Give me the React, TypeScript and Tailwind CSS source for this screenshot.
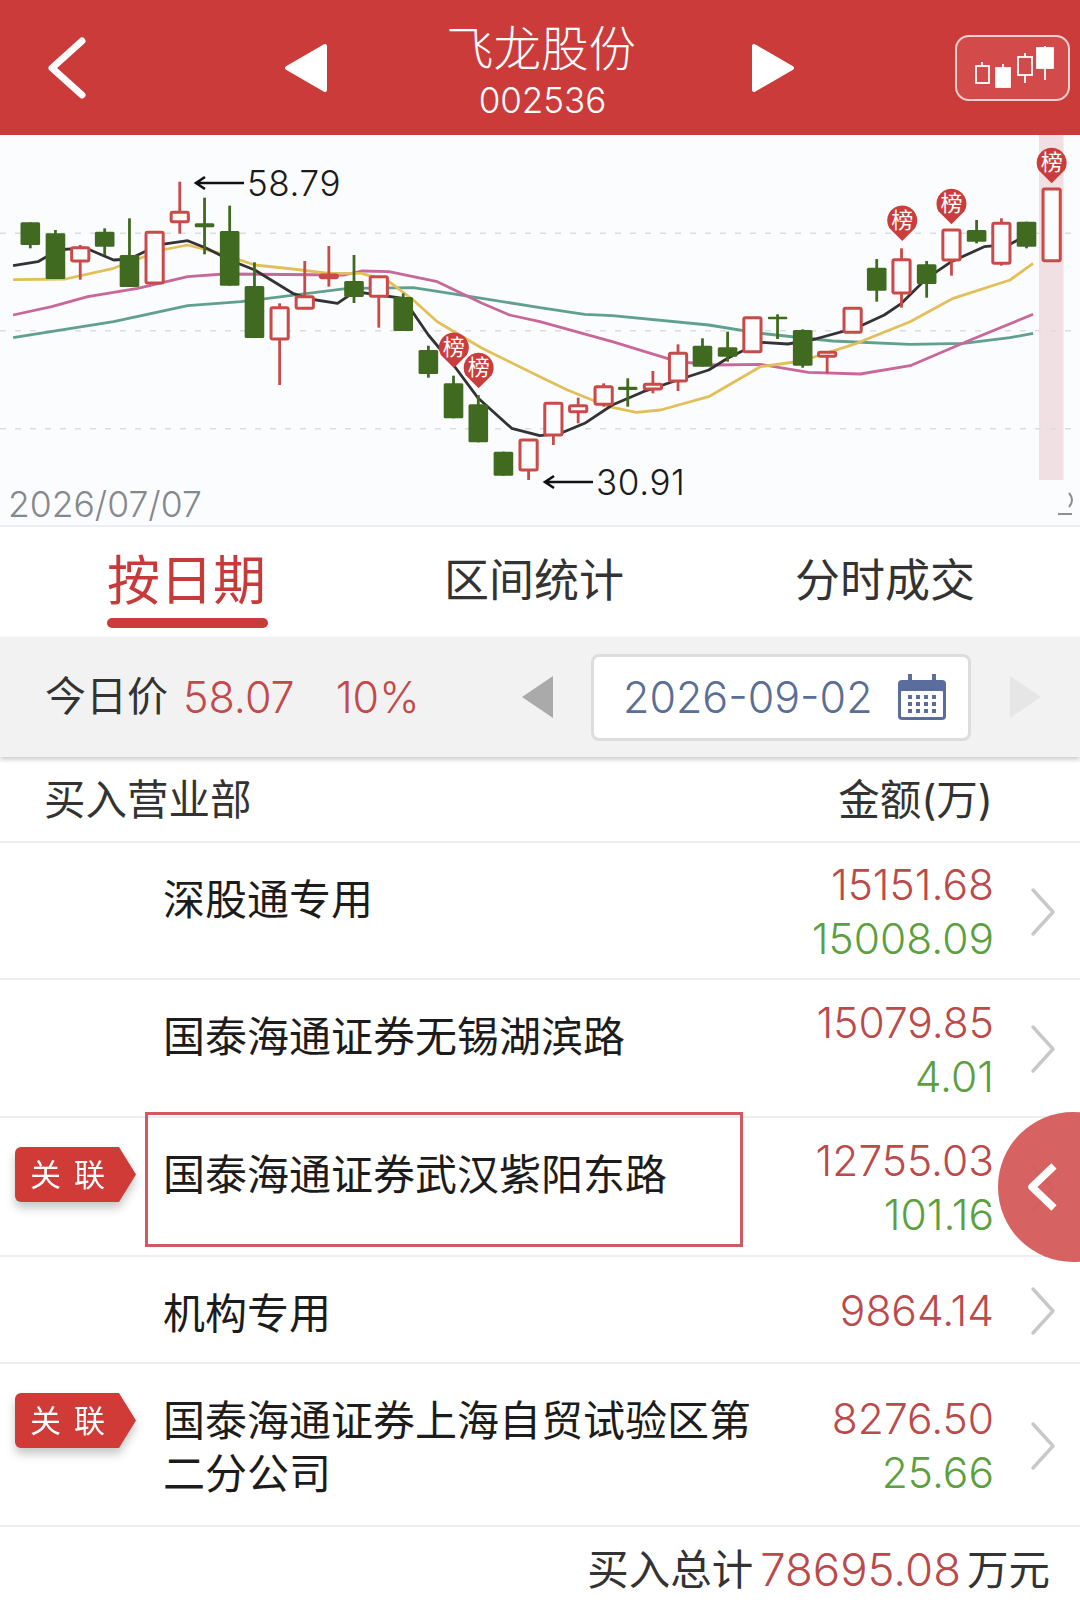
// chart numbers are read off the two zoomed crops: x / 2.904, y / 3
const sx = (x: number) => x / 2.904;
const sy = (y: number) => y / 3;
const OFFSET = 1568;

type Candle = [number, number, number, number, number, "r" | "g"];

const CANDLES: Candle[] = [
  [88, 262, 262, 330, 340, "g"],
  [161, 285, 295, 432, 432, "g"],
  [233, 330, 338, 378, 434, "r"],
  [304, 280, 290, 335, 360, "g"],
  [376, 250, 360, 456, 456, "g"],
  [449, 292, 292, 444, 444, "r"],
  [522, 140, 232, 260, 296, "r"],
  [594, 188, 265, 277, 358, "g"],
  [667, 212, 288, 452, 452, "g"],
  [739, 382, 453, 609, 609, "g"],
  [812, 505, 518, 612, 750, "r"],
  [885, 378, 485, 520, 520, "r"],
  [955, 333, 420, 428, 455, "r"],
  [1028, 360, 438, 486, 504, "g"],
  [1100, 425, 425, 484, 578, "r"],
  [1171, 475, 486, 588, 588, "g"],
  [1244, 632, 645, 717, 728, "g"],
  [1317, 722, 745, 850, 850, "g"],
  [1389, 780, 808, 922, 922, "g"],
  [1462, 950, 950, 1022, 1022, "g"],
  [1535, 915, 915, 1005, 1035, "r"],
  [OFFSET + 39, 805, 805, 900, 930, "r"],
  [OFFSET + 111, 788, 812, 830, 865, "r"],
  [OFFSET + 185, 745, 755, 808, 815, "r"],
  [OFFSET + 255, 730, 755, 765, 815, "g"],
  [OFFSET + 328, 708, 748, 762, 775, "r"],
  [OFFSET + 401, 628, 655, 738, 768, "r"],
  [OFFSET + 472, 610, 632, 695, 695, "g"],
  [OFFSET + 545, 590, 637, 665, 680, "g"],
  [OFFSET + 617, 548, 548, 650, 650, "r"],
  [OFFSET + 690, 538, 545, 553, 612, "g"],
  [OFFSET + 763, 583, 585, 692, 698, "g"],
  [OFFSET + 834, 652, 652, 664, 715, "r"],
  [OFFSET + 908, 520, 520, 592, 592, "r"],
  [OFFSET + 978, 372, 398, 467, 500, "g"],
  [OFFSET + 1050, 340, 374, 474, 518, "r"],
  [OFFSET + 1123, 378, 388, 447, 488, "g"],
  [OFFSET + 1195, 285, 285, 375, 422, "r"],
  [OFFSET + 1268, 255, 285, 320, 325, "g"],
  [OFFSET + 1340, 250, 265, 385, 392, "r"],
  [OFFSET + 1413, 260, 260, 335, 340, "g"],
  [OFFSET + 1486, 162, 162, 377, 377, "r"],
];

const toPoints = (left: number[][], right: number[][]) =>
  [...left, ...right.map(([x, y]) => [x + OFFSET, y])]
    .map(([x, y]) => `${sx(x).toFixed(1)},${sy(y).toFixed(1)}`)
    .join(" ");

const LINES = [
  {
    color: "#5fa08f",
    points: toPoints(
      [[38, 608], [330, 560], [545, 512], [700, 500], [1010, 460], [1200, 458], [1400, 490], [1568, 518]],
      [[130, 538], [210, 542], [490, 570], [640, 595], [850, 618], [1075, 628], [1230, 625], [1365, 608], [1432, 595]],
    ),
  },
  {
    color: "#c8679a",
    points: toPoints(
      [[38, 540], [150, 515], [255, 485], [400, 460], [545, 425], [650, 417], [1000, 420], [1050, 408], [1130, 410], [1270, 440], [1400, 505], [1480, 540], [1568, 560]],
      [[210, 620], [400, 680], [510, 690], [640, 688], [780, 712], [930, 717], [1075, 692], [1250, 615], [1432, 538]],
    ),
  },
  {
    color: "#e2bf58",
    points: toPoints(
      [[38, 434], [190, 432], [330, 400], [470, 345], [545, 330], [640, 355], [740, 390], [850, 402], [955, 415], [1050, 415], [1130, 440], [1200, 495], [1270, 560], [1400, 640], [1568, 725]],
      [[80, 765], [200, 815], [280, 832], [350, 825], [490, 785], [640, 695], [760, 678], [920, 625], [1075, 560], [1200, 490], [1365, 435], [1432, 385]],
    ),
  },
  {
    color: "#333333",
    points: toPoints(
      [[38, 392], [110, 380], [135, 365], [160, 345], [230, 340], [262, 345], [330, 375], [376, 372], [420, 350], [470, 328], [545, 317], [600, 340], [667, 375], [740, 405], [850, 475], [900, 492], [980, 505], [1030, 470], [1100, 480], [1171, 490], [1244, 600], [1317, 690], [1389, 790], [1486, 880], [1568, 902]],
      [[60, 895], [130, 865], [210, 810], [300, 770], [400, 735], [490, 705], [545, 670], [640, 622], [720, 627], [800, 612], [920, 578], [1000, 540], [1050, 505], [1123, 430], [1195, 380], [1290, 335], [1365, 328], [1432, 290]],
    ),
  },
];

const PINS = [
  [1318, 636],
  [1390, 697],
  [OFFSET + 1052, 255],
  [OFFSET + 1195, 205],
  [OFFSET + 1486, 82],
];

function CandleMark({ candle }: { candle: Candle }) {
  const [x, high, top, bottom, low, kind] = candle;
  const color = kind === "r" ? "#c94a48" : "#3f6a1f";
  const cx = sx(x);
  return (
    <g>
      <line x1={cx} x2={cx} y1={sy(high)} y2={sy(low)} stroke={color} strokeWidth={2.8} />
      <rect
        x={cx - (kind === "r" ? 8.6 : 9.8)}
        y={sy(top)}
        width={kind === "r" ? 17.2 : 19.6}
        height={Math.max(sy(bottom) - sy(top), 2.5)}
        rx={1.5}
        fill={kind === "r" ? "#fbfcfe" : color}
        stroke={kind === "r" ? color : "none"}
        strokeWidth={3}
      />
    </g>
  );
}

function Pin({ x, y }: { x: number; y: number }) {
  const cx = sx(x);
  const cy = sy(y);
  return (
    <g>
      <path
        d={`M${cx - 13} ${cy + 8} A15 15 0 1 1 ${cx + 13} ${cy + 8} L${cx} ${cy + 21} Z`}
        fill="#cb3d3c"
      />
      <text x={cx} y={cy + 8} textAnchor="middle" fontSize={22} fill="#ffffff">
        榜
      </text>
    </g>
  );
}

function Chart() {
  return (
    <svg viewBox="0 0 1080 390" className="block w-full h-[390px] bg-[#fbfcfe]">
      <rect x={1039} y={0} width={24.5} height={345} fill="#f0dfe3" />
      {[295, 587, 881].map((y) => (
        <line
          key={y}
          x1={0}
          x2={1080}
          y1={sy(y)}
          y2={sy(y)}
          stroke="#dcdcdc"
          strokeWidth={1.5}
          strokeDasharray="6 9"
        />
      ))}
      {LINES.map((line) => (
        <polyline key={line.color} points={line.points} fill="none" stroke={line.color} strokeWidth={2.8} strokeLinejoin="round" />
      ))}
      {CANDLES.map((candle) => (
        <CandleMark key={candle[0]} candle={candle} />
      ))}
      {PINS.map(([x, y]) => (
        <Pin key={x} x={x} y={y} />
      ))}

      <path d="M244 48 H197 M205 42 L196 48 L205 54" fill="none" stroke="#111111" strokeWidth={2.6} />
      <text x={247} y={61} fontSize={35} fontWeight={300} fill="#1a1a1a" letterSpacing={0.6}>
        58.79
      </text>
      <path d="M593 347 H546 M554 341 L545 347 L554 353" fill="none" stroke="#111111" strokeWidth={2.6} />
      <text x={596} y={360} fontSize={35} fontWeight={300} fill="#1a1a1a" letterSpacing={0.6}>
        30.91
      </text>
      <text x={8} y={382} fontSize={35.5} fontWeight={300} fill="#85888c">
        2026/07/07
      </text>
      <path d="M1069 358 Q1075 365 1069 372 M1058 379 H1072" fill="none" stroke="#8d8f92" strokeWidth={2} />
    </svg>
  );
}

function KlineIcon() {
  return (
    <svg width="84" height="48" viewBox="0 0 84 48" fill="none" stroke="#ffffff" strokeWidth="1.8">
      <path d="M11 18 V40 M32 20 V44 M54 9 V39 M74 2 V36" />
      <rect x="5" y="22" width="13" height="17" fill="#d24a4a" />
      <rect x="25" y="24" width="14" height="19" fill="#ffffff" />
      <rect x="47" y="13" width="14" height="18" fill="#d24a4a" />
      <rect x="66" y="4" width="16" height="20" fill="#ffffff" />
    </svg>
  );
}

function CalendarIcon() {
  return (
    <svg width="48" height="46" viewBox="0 0 48 46">
      <rect x="0" y="6" width="48" height="40" rx="4" fill="#5a6d9c" />
      <rect x="3" y="17" width="42" height="26" rx="1" fill="#ffffff" />
      <rect x="10" y="0" width="4" height="12" fill="#5a6d9c" />
      <rect x="34" y="0" width="4" height="12" fill="#5a6d9c" />
      {[10, 18, 26, 34].map((x) =>
        [21, 28, 35].map((y) => <rect key={`${x}-${y}`} x={x} y={y} width="4" height="4" fill="#5a6d9c" />),
      )}
    </svg>
  );
}

function RelatedTag() {
  return (
    <div className="absolute left-[15px] top-[29px] drop-shadow-[0_6px_5px_rgba(0,0,0,0.22)]">
      <div className="w-[121px] h-[55px] flex items-center pl-[15px] bg-[#d03b38] rounded-l-[6px] [clip-path:polygon(0_0,104px_0,100%_50%,104px_100%,0_100%)] text-white text-[31px] leading-none gap-[13px]">
        <span>关</span>
        <span>联</span>
      </div>
    </div>
  );
}

interface Row {
  name: string;
  buy: string;
  sell?: string;
  height: string;
  tag?: boolean;
  boxed?: boolean;
}

const ROWS: Row[] = [
  { name: "深股通专用", buy: "15151.68", sell: "15008.09", height: "h-[137px]" },
  { name: "国泰海通证券无锡湖滨路", buy: "15079.85", sell: "4.01", height: "h-[138px]" },
  { name: "国泰海通证券武汉紫阳东路", buy: "12755.03", sell: "101.16", height: "h-[139px]", tag: true, boxed: true },
  { name: "机构专用", buy: "9864.14", height: "h-[107px]" },
  { name: "国泰海通证券上海自贸试验区第二分公司", buy: "8276.50", sell: "25.66", height: "h-[163px]", tag: true },
];

function SeatRow({ row }: { row: Row }) {
  return (
    <div className={`relative flex items-start border-b-2 border-[#eeeeee] ${row.height}`}>
      {row.tag && <RelatedTag />}
      {row.boxed && (
        <div className="absolute left-[145px] top-[-6px] w-[598px] h-[135px] border-[3px] border-[#cf5a60]" />
      )}
      <div className="ml-[163px] w-[590px] pt-[30px] text-[42px] leading-[53px] text-[#1c1c1c]">{row.name}</div>
      <div className="ml-auto h-full flex flex-col justify-center items-end text-[42.5px] leading-[54px] font-light pt-[3px] mr-[36px] [font-family:Inter,sans-serif]">
        <span className="text-[#bb4a4a]">{row.buy}</span>
        {row.sell && <span className="text-[#5c9f3f]">{row.sell}</span>}
      </div>
      <div className="h-full flex items-center mr-[24px] pt-[2px] shrink-0">
        <svg width="26" height="50" viewBox="0 0 26 50" fill="none" stroke="#c8c8c8" strokeWidth="3.4" strokeLinecap="round" strokeLinejoin="round">
          <path d="M3 3 L23 25 L3 47" />
        </svg>
      </div>
    </div>
  );
}

export default function App() {
  return (
    <div className="relative w-[1080px] h-[1604px] overflow-hidden bg-white [font-family:Inter,'Noto_Sans_CJK_SC',sans-serif]">
      <header className="h-[135px] bg-[#cb3b39] flex items-center text-white relative">
        <svg width="42" height="62" viewBox="0 0 42 62" fill="none" stroke="#ffffff" strokeWidth="7" strokeLinecap="round" strokeLinejoin="round" className="ml-[46px] shrink-0">
          <path d="M36 4 L6 31 L36 58" />
        </svg>
        <svg width="44" height="50" viewBox="0 0 44 50" className="ml-[196px] shrink-0">
          <path d="M41 3 V47 L3 25 Z" fill="#ffffff" stroke="#ffffff" strokeWidth="4" strokeLinejoin="round" />
        </svg>
        <div className="w-[423px] flex flex-col items-center shrink-0 pt-[4px]">
          <div className="text-[47.5px] leading-[54px] font-light pl-[3px]">飞龙股份</div>
          <div className="text-[35px] leading-[36px] font-light mt-[6px] pl-[6px]">002536</div>
        </div>
        <svg width="44" height="50" viewBox="0 0 44 50" className="shrink-0">
          <path d="M3 3 V47 L41 25 Z" fill="#ffffff" stroke="#ffffff" strokeWidth="4" strokeLinejoin="round" />
        </svg>
        <div className="ml-auto mr-[10px] w-[115px] h-[66px] rounded-[14px] border-2 border-[#f5d0d0] bg-[#d24a4a] flex items-center justify-center">
          <KlineIcon />
        </div>
      </header>

      <Chart />

      <nav className="h-[112px] flex border-t-2 border-[#eeeeee] relative">
        <div className="absolute left-[107px] top-[91px] w-[161px] h-[10px] rounded-full bg-[#cb3b39]" />
        <div className="absolute left-[107px] top-[24px] text-[53px] leading-[60px] text-[#c63b39]">按日期</div>
        <div className="absolute left-[444px] top-[28px] text-[45px] leading-[52px] text-[#333333]">区间统计</div>
        <div className="absolute left-[795px] top-[28px] text-[45px] leading-[52px] text-[#333333]">分时成交</div>
      </nav>

      <section className="h-[120px] bg-[#f2f2f2] shadow-[0_3px_4px_rgba(0,0,0,0.18)] flex items-center relative">
        <div className="w-[477px] ml-[45px] flex items-center shrink-0">
          <span className="text-[41px] text-[#333333]">今日价</span>
          <span className="ml-[15px] text-[43px] font-light text-[#c24a4a]">58.07</span>
          <span className="ml-[41px] text-[43px] font-light text-[#c24a4a]">10%</span>
        </div>
        <svg width="32" height="42" viewBox="0 0 32 42" className="shrink-0">
          <path d="M31 0 V42 L0 21 Z" fill="#aaaaaa" />
        </svg>
        <div className="ml-[37px] w-[380px] h-[87px] rounded-[8px] border-[3px] border-[#dddddd] bg-white flex items-center pl-[29px] shrink-0">
          <span className="text-[43px] font-light text-[#5a6e96]">2026-09-02</span>
          <span className="ml-auto mr-[22px]">
            <CalendarIcon />
          </span>
        </div>
        <svg width="32" height="42" viewBox="0 0 32 42" className="ml-[39px] shrink-0">
          <path d="M0 0 V42 L31 21 Z" fill="#e6e6e6" />
        </svg>
      </section>

      <div className="h-[86px] flex items-center justify-between pl-[44px] pr-[87px] pt-[3px] border-b-2 border-[#eeeeee] text-[41.5px] text-[#333333]">
        <span>买入营业部</span>
        <span>金额(万)</span>
      </div>

      {ROWS.map((row) => (
        <SeatRow key={row.name} row={row} />
      ))}

      <div className="h-[77px] flex items-center justify-end pr-[30px] pt-[10px] text-[41.5px] text-[#333333]">
        <span>买入总计</span>
        <span className="ml-[7px] mr-[6px] text-[45.5px] font-light text-[#bb4a4a]">78695.08</span>
        <span>万元</span>
      </div>

      {/* floating drawer handle over the third row */}
      <div className="absolute left-[998px] top-[1112px] w-[150px] h-[150px] rounded-full bg-[#d45a58]/95 flex items-center pl-[28px]">
        <svg width="32" height="48" viewBox="0 0 32 48" fill="none" stroke="#ffffff" strokeWidth="7.5" strokeLinejoin="round">
          <path d="M28 3 L6 24 L28 45" />
        </svg>
      </div>
    </div>
  );
}
